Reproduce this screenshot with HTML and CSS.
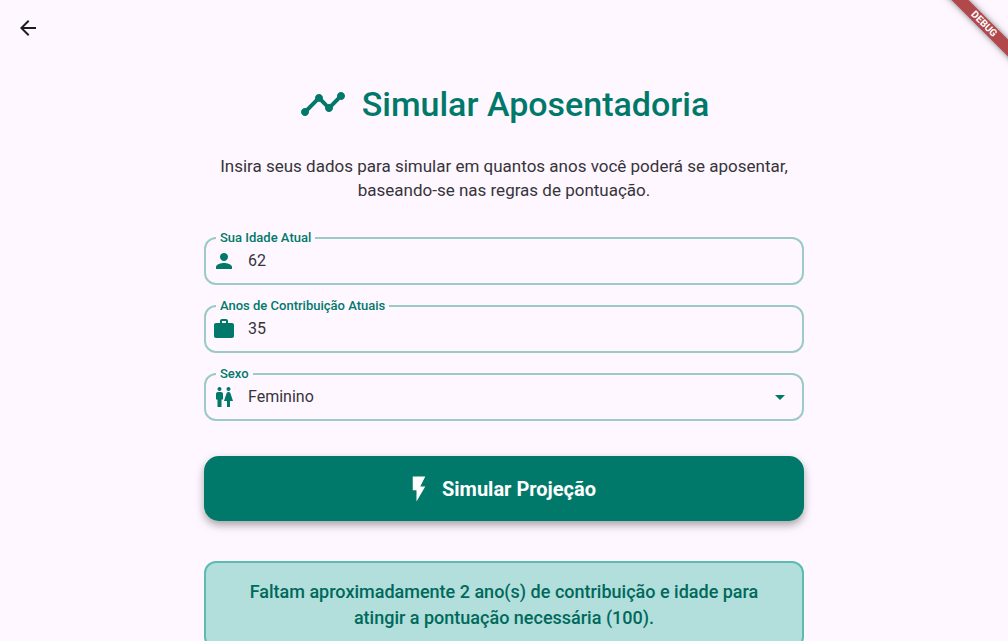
FILE: index.html
```html
<!DOCTYPE html>
<html lang="pt-BR">
<head>
<meta charset="utf-8">
<meta name="viewport" content="width=device-width, initial-scale=1">
<title>Simular Aposentadoria</title>
<link rel="stylesheet" href="styles.css">
</head>
<body>
<header class="app-bar">
  <button class="back" type="button" aria-label="Voltar">
    <svg class="icon" viewBox="0 0 24 24"><path d="M20 11H7.83l5.59-5.59L12 4l-8 8 8 8 1.41-1.41L7.83 13H20v-2z"/></svg>
  </button>
</header>
<div class="ribbon-area"><span class="ribbon">DEBUG</span></div>
<main class="content">
  <div class="heading">
    <svg class="heading-icon" viewBox="0 0 24 24" aria-hidden="true"><path d="M23 8c0 1.1-.9 2-2 2-.18 0-.35-.02-.51-.07l-3.56 3.55c.05.16.07.34.07.52 0 1.1-.9 2-2 2s-2-.9-2-2c0-.18.02-.36.07-.52l-2.55-2.55c-.16.05-.34.07-.52.07s-.36-.02-.52-.07l-4.55 4.56c.05.16.07.33.07.51 0 1.1-.9 2-2 2s-2-.9-2-2 .9-2 2-2c.18 0 .35.02.51.07l4.56-4.55C8.02 9.36 8 9.18 8 9c0-1.1.9-2 2-2s2 .9 2 2c0 .18-.02.36-.07.52l2.55 2.55c.16-.05.34-.07.52-.07s.36.02.52.07l3.55-3.56C19.02 8.35 19 8.18 19 8c0-1.1.9-2 2-2s2 .9 2 2z"/></svg>
    <h1 class="title">Simular Aposentadoria</h1>
  </div>
  <p class="intro">Insira seus dados para simular em quantos anos você poderá se aposentar, baseando-se nas regras de pontuação.</p>
  <form class="form">
    <fieldset class="field">
      <legend class="field-legend"><label for="idade">Sua Idade Atual</label></legend>
      <div class="field-row">
        <svg class="icon" viewBox="0 0 24 24" aria-hidden="true"><path d="M12 12c2.21 0 4-1.79 4-4s-1.79-4-4-4-4 1.79-4 4 1.79 4 4 4zm0 2c-2.67 0-8 1.34-8 4v2h16v-2c0-2.66-5.33-4-8-4z"/></svg>
        <input class="control" id="idade" type="text" inputmode="numeric" value="62">
      </div>
    </fieldset>
    <fieldset class="field">
      <legend class="field-legend"><label for="anos">Anos de Contribuição Atuais</label></legend>
      <div class="field-row">
        <svg class="icon" viewBox="0 0 24 24" aria-hidden="true"><path d="M20 6h-4V4c0-1.11-.89-2-2-2h-4c-1.11 0-2 .89-2 2v2H4c-1.11 0-2 .89-2 2v11c0 1.11.89 2 2 2h16c1.11 0 2-.89 2-2V8c0-1.11-.89-2-2-2zm-6 0h-4V4h4v2z"/></svg>
        <input class="control" id="anos" type="text" inputmode="numeric" value="35">
      </div>
    </fieldset>
    <fieldset class="field">
      <legend class="field-legend"><label for="sexo">Sexo</label></legend>
      <div class="field-row">
        <svg class="icon" viewBox="0 0 24 24" aria-hidden="true"><path d="M5.5 22v-7.5H4V9c0-1.1.9-2 2-2h3c1.1 0 2 .9 2 2v5.5H9.5V22h-4zM18 22v-6h3l-2.54-7.63C18.18 7.55 17.42 7 16.56 7h-.12c-.86 0-1.63.55-1.9 1.37L12 16h3v6h3zM7.5 6c1.11 0 2-.89 2-2s-.89-2-2-2-2 .89-2 2 .89 2 2 2zm9 0c1.11 0 2-.89 2-2s-.89-2-2-2-2 .89-2 2 .89 2 2 2z"/></svg>
        <select class="control" id="sexo"><option>Feminino</option><option>Masculino</option></select>
        <svg class="icon" viewBox="0 0 24 24" aria-hidden="true"><path d="M7 10l5 5 5-5z"/></svg>
      </div>
    </fieldset>
    <button class="submit" type="button">
      <svg class="submit-icon" viewBox="0 0 24 24" aria-hidden="true"><path d="M7 2v11h3v9l7-12h-4l4-8z"/></svg>
      <span>Simular Projeção</span>
    </button>
  </form>
  <section class="result"><p class="result-text">Faltam aproximadamente 2 ano(s) de contribuição e idade para atingir a pontuação necessária (100).</p></section>
</main>
</body>
</html>
```
FILE: styles.css
```css
:root {
  --teal: #00796b;
  --surface: #fef7ff;
  --ink: #1d1b20;
  --ink-soft: #36343a;
}

* { box-sizing: border-box; }

html { scrollbar-width: none; }

body {
  margin: 0;
  background: var(--surface);
  color: var(--ink);
  font-family: Roboto, "Liberation Sans", sans-serif;
}

.icon {
  flex: none;
  width: 24px;
  height: 24px;
  fill: currentColor;
}

.app-bar {
  display: flex;
  align-items: center;
  height: 56px;
  padding: 0 8px;
}

.back {
  display: grid;
  place-items: center;
  width: 40px;
  height: 40px;
  padding: 0;
  border: 0;
  border-radius: 50%;
  background: none;
  color: var(--ink);
}

.ribbon-area {
  position: absolute;
  top: 0;
  right: 0;
  width: 72px;
  height: 72px;
  overflow: hidden;
  pointer-events: none;
}

.ribbon {
  position: absolute;
  top: 18px;
  right: -36px;
  width: 120px;
  transform: rotate(45deg);
  background: #b0484c;
  box-shadow: 0 0 6px rgba(0, 0, 0, 0.5);
  color: #fff;
  font-size: 10px;
  font-weight: 700;
  line-height: 12px;
  text-align: center;
}

.content {
  max-width: 648px;
  margin: 0 auto;
  padding: 24px;
}

.heading {
  display: flex;
  align-items: center;
  justify-content: center;
  gap: 15px;
}

.heading-icon {
  flex: none;
  width: 48px;
  height: 48px;
  fill: var(--teal);
}

.title {
  margin: 0;
  color: var(--teal);
  font-size: 34px;
  font-weight: 500;
  line-height: 48px;
}

.intro {
  margin: 26px 0 28px;
  color: var(--ink-soft);
  font-size: 17px;
  line-height: 24px;
  text-align: center;
}

.form {
  display: flex;
  flex-direction: column;
}

.field {
  min-width: 0;
  margin: 0 0 13px;
  padding: 0 10px 7px 6px;
  border: 2px solid #9ccac6;
  border-radius: 12px;
}

.field-legend {
  margin-left: 4px;
  padding: 0 4px;
  color: var(--teal);
  font-size: 13px;
  font-weight: 500;
  line-height: 16px;
}

.field-row {
  display: flex;
  align-items: center;
  gap: 12px;
  height: 30px;
  color: var(--teal);
}

.control {
  flex: 1;
  min-width: 0;
  height: 24px;
  padding: 0;
  border: 0;
  outline: 0;
  appearance: none;
  background: none;
  color: var(--ink-soft);
  font: 16px/24px Roboto, "Liberation Sans", sans-serif;
}

.submit {
  display: flex;
  align-items: center;
  justify-content: center;
  gap: 8px;
  height: 65px;
  margin: 22px 0 40px;
  padding: 0 12px 0 4px;
  border: 0;
  border-radius: 15px;
  background: var(--teal);
  box-shadow: 0 4px 8px rgba(0, 0, 0, 0.35);
  color: #fff;
  font: 700 20px/28px Roboto, "Liberation Sans", sans-serif;
}

.submit-icon {
  width: 30px;
  height: 30px;
  fill: currentColor;
}

.result {
  padding: 16px 20px;
  border: 2px solid #5dbbb1;
  border-radius: 12px;
  background: #b2dfdb;
}

.result-text {
  margin: 0;
  color: #00695c;
  font-size: 18px;
  font-weight: 500;
  line-height: 26px;
  text-align: center;
}
```
